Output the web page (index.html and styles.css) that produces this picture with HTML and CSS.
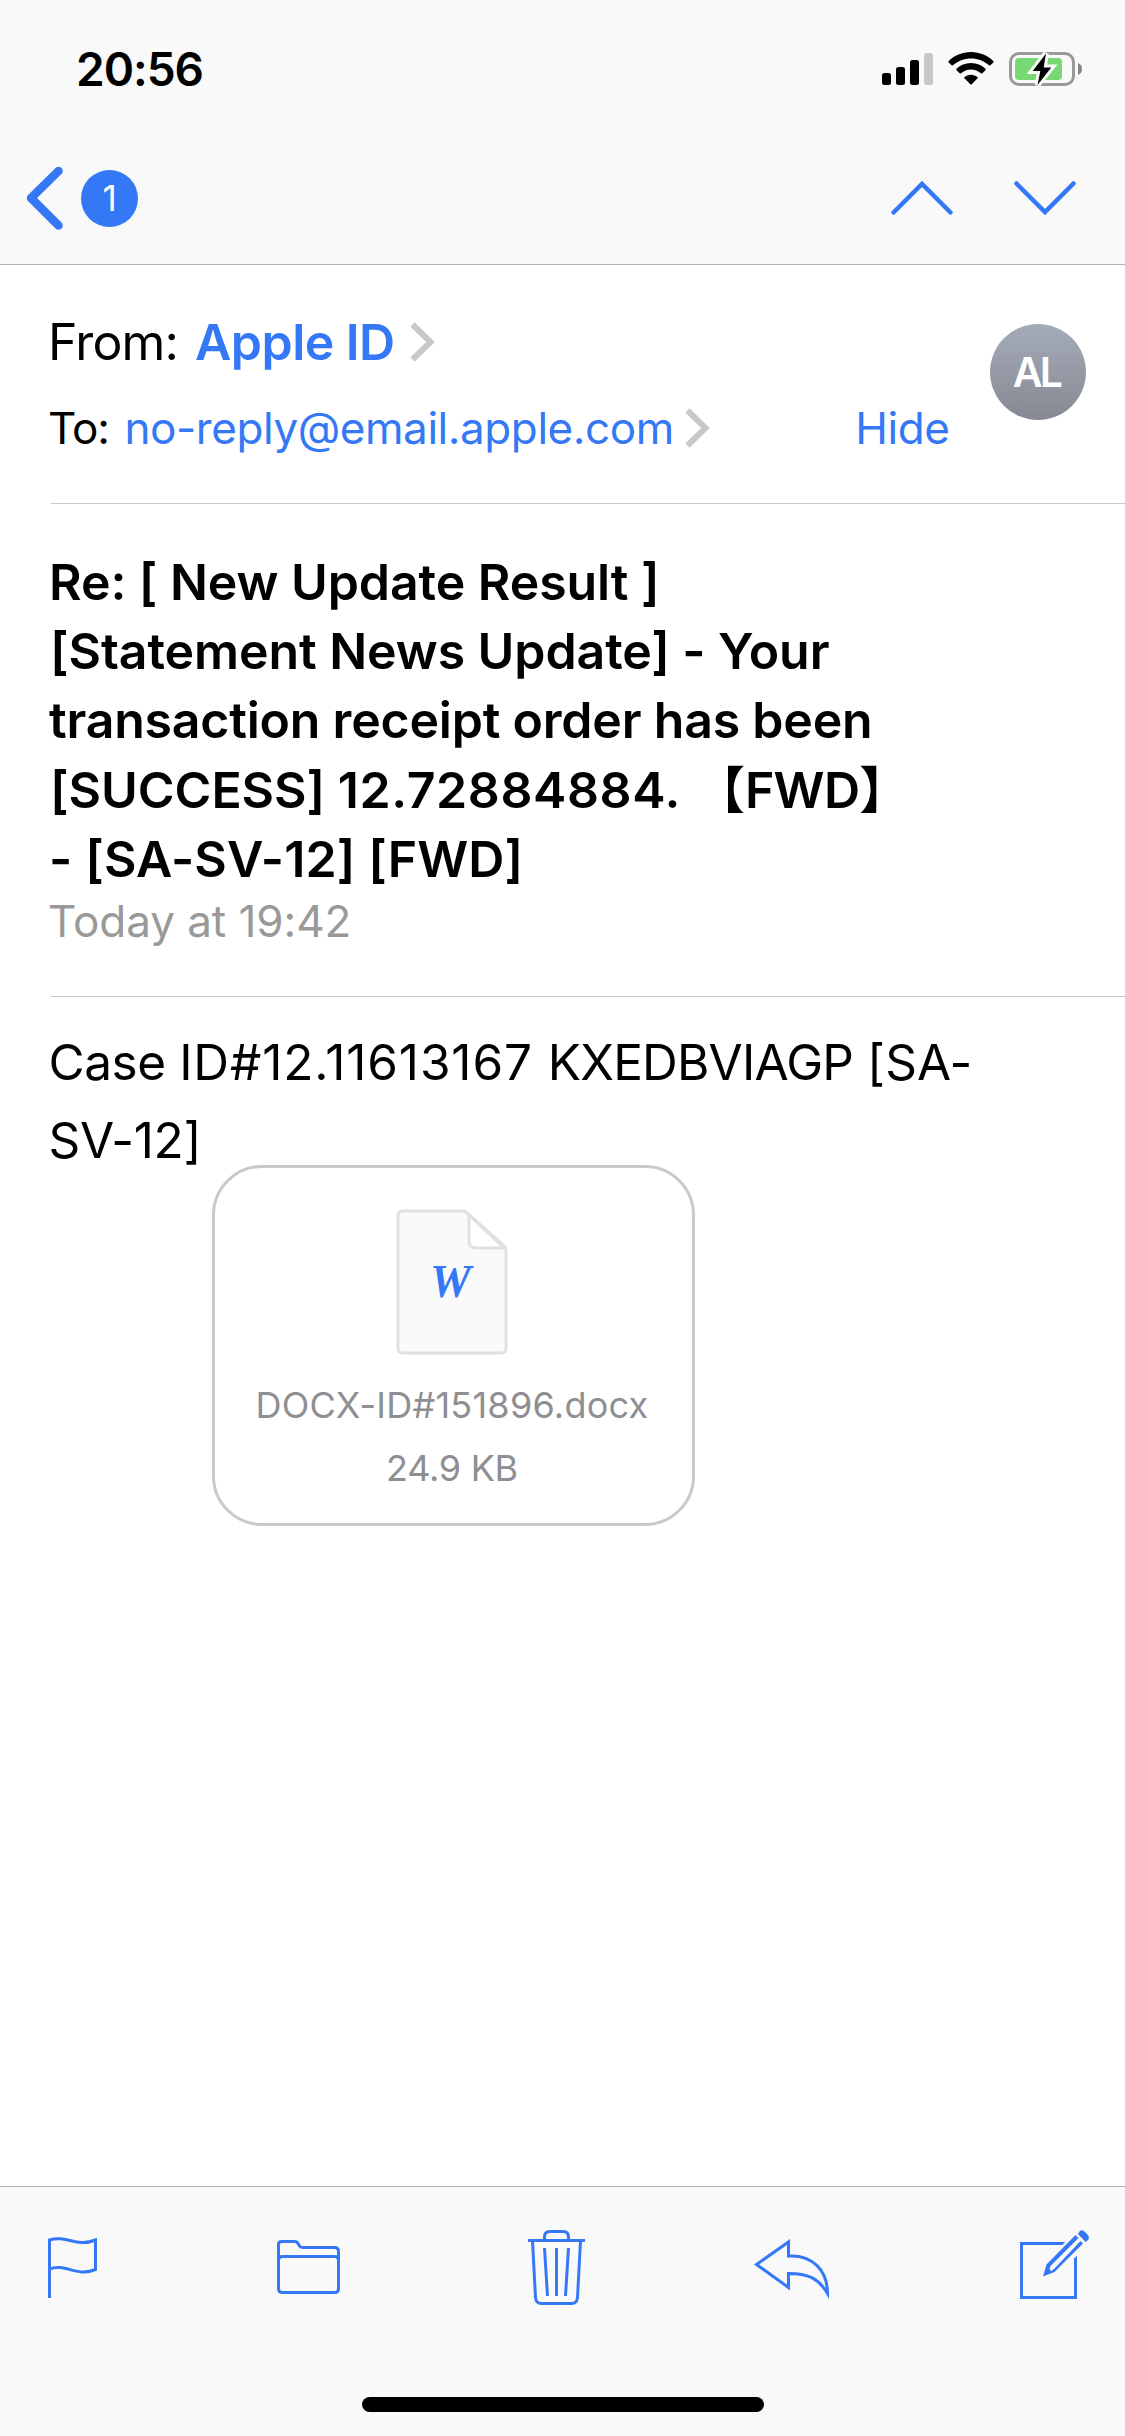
FILE: index.html
```
<!DOCTYPE html>
<html lang="en">
<head>
<meta charset="utf-8">
<title>Mail</title>
<link rel="stylesheet" href="styles.css">
</head>
<body>
<div class="screen">
  <header class="top">
    <div class="status">
      <span class="clock">20:56</span>
      <div class="indicators">
        <svg class="signal" width="51" height="32" viewBox="0 0 51 32">
          <rect x="0" y="20" width="9" height="12" rx="2.5"/>
          <rect x="14" y="14" width="9" height="18" rx="2.5"/>
          <rect x="28" y="7" width="9" height="25" rx="2.5"/>
          <rect x="42" y="0" width="9" height="32" rx="2.5" fill="#c7c7c7"/>
        </svg>
        <svg class="wifi" width="46" height="34" viewBox="0 0 46 34">
          <path d="M23 0C31.800 0 39.800 3.500 45.300 9Q45.900 9.700 45.300 10.400L42.400 13.300Q41.700 13.900 41 13.300C36 8.700 29.800 6.400 23 6.400C16.200 6.400 10 8.700 5 13.300Q4.300 13.900 3.600 13.300L.7 10.400Q.1 9.700 .7 9C6.200 3.500 14.200 0 23 0Z"/>
          <path d="M23 11C28.700 11 33.700 13.200 37.500 16.800Q38.100 17.500 37.500 18.200L34.300 21.300Q33.600 21.900 32.900 21.300C30 18.900 26.900 17.500 23 17.500C19.100 17.500 16 18.900 13.100 21.300Q12.400 21.900 11.700 21.300L8.500 18.200Q7.900 17.500 8.500 16.800C12.300 13.200 17.300 11 23 11Z"/>
          <path d="M23 22.700C25.600 22.700 27.800 23.700 29.500 25.100Q30 25.700 29.500 26.300L23.700 32.200Q23 32.800 22.300 32.200L16.500 26.300Q16 25.700 16.500 25.100C18.200 23.700 20.400 22.700 23 22.700Z"/>
        </svg>
        <svg class="battery" width="74" height="36" viewBox="0 0 74 36">
          <rect x="1.500" y="2.500" width="63" height="31" rx="8.500" fill="none" stroke="#999" stroke-width="3"/>
          <rect x="6" y="7" width="47" height="22" rx="4" fill="#78d873"/>
          <path d="M69 12Q73 13.500 73 18T69 24Z" fill="#858585"/>
          <path d="M37 2.500L23.700 20H31.300L28.500 34L42.300 16.500H34.700Z" fill="#f9f9f9" stroke="#f9f9f9" stroke-width="6"/>
          <path d="M37 2.500L23.700 20H31.300L28.500 34L42.300 16.500H34.700Z"/>
        </svg>
      </div>
    </div>
    <nav class="nav">
      <svg class="back" width="38" height="64" viewBox="0 0 38 64"><path d="M33.500 5L6 32L33.500 59.500" fill="none" stroke="#3478f6" stroke-width="8.500" stroke-linecap="round" stroke-linejoin="round"/></svg>
      <span class="badge">1</span>
      <svg class="up" width="62" height="34" viewBox="0 0 62 34"><path d="M2.500 31.500L31 3L59.500 31.500"/></svg>
      <svg class="down" width="62" height="34" viewBox="0 0 62 34"><path d="M2.500 2.500L31 31L59.500 2.500"/></svg>
    </nav>
  </header>

  <main class="message">
    <section class="people">
      <div class="rows">
        <div class="row from"><span class="label">From:</span><span class="name">Apple ID</span><svg class="chev" width="25" height="40" viewBox="0 0 25 40"><path d="M2.500 2.500L20.500 20L2.500 37.500"/></svg></div>
        <div class="row to"><span class="label">To:</span><span class="addr">no-reply@email.apple.com</span><svg class="chev" width="25" height="40" viewBox="0 0 25 40"><path d="M2.500 2.500L20.500 20L2.500 37.500"/></svg><span class="hide">Hide</span></div>
      </div>
      <div class="avatar">AL</div>
    </section>

    <section class="subject">
      <h1>
        <span class="line l1">Re: [ New Update Result ]</span>
        <span class="line l2">[Statement News Update] - Your</span>
        <span class="line l3">transaction receipt order has been</span>
        <span class="line l4">[SUCCESS] <span class="num">12.72884884.</span><span class="lb">【</span><span class="fwd">FWD</span><span class="rb">】</span></span>
        <span class="line l5">- [SA-SV-12] [FWD]</span>
      </h1>
      <p class="date">Today at 19:42</p>
    </section>

    <section class="body">
      <p class="text"><span class="case">Case </span><span class="case-id">ID#12.11613167 </span><span class="code">KXEDBVIAGP</span> [SA-<br><span class="text2">SV-12]</span></p>
      <div class="file">
        <svg class="doc" width="112" height="146" viewBox="0 0 112 146">
          <path d="M7 2H66Q69 2 71 4L108 36.500Q110 38.500 110 41.500V139Q110 144 105 144H7Q2 144 2 139V7Q2 2 7 2Z" fill="#fafafa" stroke="#e0e0e0" stroke-width="3"/>
          <path d="M73 6V32Q73 39 80 39H108Z" fill="#fff" stroke="#e0e0e0" stroke-width="3" stroke-linejoin="round"/>
          <text x="54.500" y="88" text-anchor="middle" class="w">W</text>
        </svg>
        <span class="fname">DOCX-ID#151896.docx</span>
        <span class="fsize">24.9 KB</span>
      </div>
    </section>
  </main>

  <footer class="bottom">
    <div class="tools">
      <svg class="flag" width="50" height="61" viewBox="0 0 50 61"><path d="M1.500 61V3C18 -2.500 28 11 47.500 3V32.500C28 40.500 18 26 1.500 32"/></svg>
      <svg class="folder" width="63" height="54" viewBox="0 0 63 54"><path d="M1.500 48V4.500Q1.500 1.500 4.500 1.500H17.500Q20 1.500 21 3.500L23 6.500Q24 7.500 26 7.500H57.500Q61.500 7.500 61.500 11.500V48.500Q61.500 52.500 57.500 52.500H5.500Q1.500 52.500 1.500 48.500V20.500Q1.500 16.500 5.500 16.500H57.500Q61.500 16.500 61.500 20.500"/></svg>
      <svg class="trash" width="57" height="75" viewBox="0 0 57 75"><path d="M0 10.500H57M16.500 10V7Q16.500 1.500 22 1.500H35Q40.500 1.500 40.500 7V10M4.500 11L7.500 67.500Q8 73.500 13.500 73.500H43.500Q49 73.500 49.500 67.500L52.500 11M16.500 18L19.500 66M28.500 18V66M40.500 18L37.500 66"/></svg>
      <svg class="reply" width="76" height="58" viewBox="0 0 76 58"><path d="M2.500 25.500L34.500 3V17C58 15.500 73.500 31 73.500 54.500C64.500 39 53.500 34.500 34.500 34.500V48.500Z"/></svg>
      <svg class="compose" width="70" height="70" viewBox="0 0 70 70">
        <path d="M41 13.500H1.500V67.500H55.500V28"/>
        <path d="M40 12H45.500L42 15H40ZM54 29L57 25.500V30H54Z" class="solid"/>
        <path d="M55.500 5L58.500 8L30.500 36L29.500 39.500L31.500 41L34.500 38.500L60.500 11L63 13.500L34.500 42L23 46.500L26.500 34.500Z" class="solid"/>
        <path d="M59.500 1.500Q62 -1 65 2L67.500 4.500Q70 7.500 68 10L65.700 12L57.800 4Z" class="solid"/>
      </svg>
    </div>
    <div class="home"></div>
  </footer>
</div>
</body>
</html>
```
FILE: styles.css
```
* { box-sizing: border-box; }
body { margin: 0; }
h1, p { margin: 0; }
svg { display: block; flex: none; overflow: visible; }

.screen {
  width: 1125px;
  height: 2436px;
  display: flex;
  flex-direction: column;
  background: #fff;
  color: #000;
  font-family: Inter, "Noto Sans CJK JP", sans-serif;
  white-space: nowrap;
}

/* Status and navigation bars */
.top { height: 265px; background: #f9f9f9; border-bottom: 1px solid #b2b2b2; }
.status {
  height: 137px;
  padding: 0 42px 0 76px;
  display: flex;
  align-items: center;
  justify-content: space-between;
}
.clock { font-size: 46px; font-weight: 600; letter-spacing: -1px; }
.indicators { display: flex; align-items: center; }
.wifi { margin-left: 15px; }
.battery { margin-left: 15px; }

.nav { height: 127px; padding: 0 49px 5px 25px; display: flex; align-items: center; }
.badge {
  width: 57px;
  height: 57px;
  margin-left: 18px;
  border-radius: 50%;
  background: #3478f6;
  color: #fff;
  font-size: 35px;
  line-height: 57px;
  text-align: center;
}
.up, .down { fill: none; stroke: #3478f6; stroke-width: 4.5; stroke-linecap: round; }
.up { margin-left: auto; }
.down { margin-left: 61px; }

/* Sender and recipient */
.message { flex: 1; }
.people {
  height: 239px;
  margin-left: 51px;
  padding: 47px 39px 0 0;
  display: flex;
  border-bottom: 1px solid #c8c7cc;
}
.rows { flex: 1; display: flex; flex-direction: column; gap: 26px; margin-left: -3px; }
.row { display: flex; align-items: center; height: 60px; color: #3478f6; }
.label { color: #000; }
.chev { fill: none; stroke: #c8c8c8; stroke-width: 6; }
.from { font-size: 50px; }
.from .label { width: 147px; letter-spacing: -0.83px; }
.from .chev { margin-left: 15px; }
.name { font-weight: 600; letter-spacing: -0.55px; }
.to { font-size: 44px; }
.to .label { width: 76.500px; letter-spacing: -1px; }
.to .chev { margin-left: 11px; }
.addr { letter-spacing: -0.43px; }
.hide { margin: 0 1.500px 0 auto; letter-spacing: -0.43px; }
.avatar {
  width: 96px;
  height: 96px;
  margin: 12px 0 0 39px;
  padding-right: 3px;
  border-radius: 50%;
  background: linear-gradient(#a5abb9, #858992);
  color: #fff;
  font-size: 41px;
  font-weight: 600;
  line-height: 97px;
  letter-spacing: -2.8px;
  text-align: center;
}

/* Subject */
.subject {
  height: 493px;
  margin-left: 51px;
  padding-top: 43.500px;
  border-bottom: 1px solid #c8c7cc;
}
h1 { font-size: 50px; font-weight: 600; margin-left: -2px; }
.line { display: block; height: 69.400px; line-height: 69.400px; }
.l1 { letter-spacing: -0.07px; }
.l2 { padding-left: 1px; letter-spacing: -0.07px; }
.l3 { letter-spacing: -0.2px; }
.l4 { padding-left: 1px; letter-spacing: -0.05px; }
.l5 { letter-spacing: 0.14px; }
.num { letter-spacing: 0.6px; }
.lb { margin-left: 14px; }
.fwd { letter-spacing: -0.7px; }
.date { margin-left: -3px; font-size: 44px; line-height: 54px; letter-spacing: -0.05px; color: #999; }

/* Message body */
.body { padding: 26px 0 0 48.500px; }
.text { font-size: 49.5px; line-height: 78px; letter-spacing: 0.07px; }
.case { letter-spacing: -0.45px; }
.case-id { letter-spacing: 0.9px; }
.code { letter-spacing: -0.8px; }
.text2 { letter-spacing: -0.3px; }
.file {
  width: 483px;
  height: 361px;
  margin: -14px 0 0 163px;
  padding: 41px 2px 0 0;
  border: 3px solid #c9c9c9;
  border-radius: 50px;
  display: flex;
  flex-direction: column;
  align-items: center;
  font-size: 36px;
  line-height: 63px;
  color: #8e8e93;
}
.w { font: italic bold 46px "Liberation Serif", serif; fill: #3478f6; }
.fname { margin-top: 19px; letter-spacing: 0.25px; }
.fsize { letter-spacing: -0.28px; }

/* Toolbar */
.bottom {
  height: 250px;
  background: #f9f9f9;
  border-top: 1px solid #b2b2b2;
  display: flex;
  flex-direction: column;
  align-items: center;
}
.tools {
  align-self: stretch;
  height: 210px;
  padding-left: 48px;
  display: flex;
  align-items: flex-start;
  fill: none;
  stroke: #3478f6;
  stroke-width: 3;
}
.solid { fill: #3478f6; stroke: none; }
.flag { margin-top: 50px; }
.folder { margin: 53px 0 0 179px; }
.trash { margin: 43px 0 0 188px; }
.reply { margin: 52px 0 0 169px; }
.compose { margin: 43px 0 0 190px; }
.home { width: 402px; height: 15px; border-radius: 8px; background: #000; }
```
